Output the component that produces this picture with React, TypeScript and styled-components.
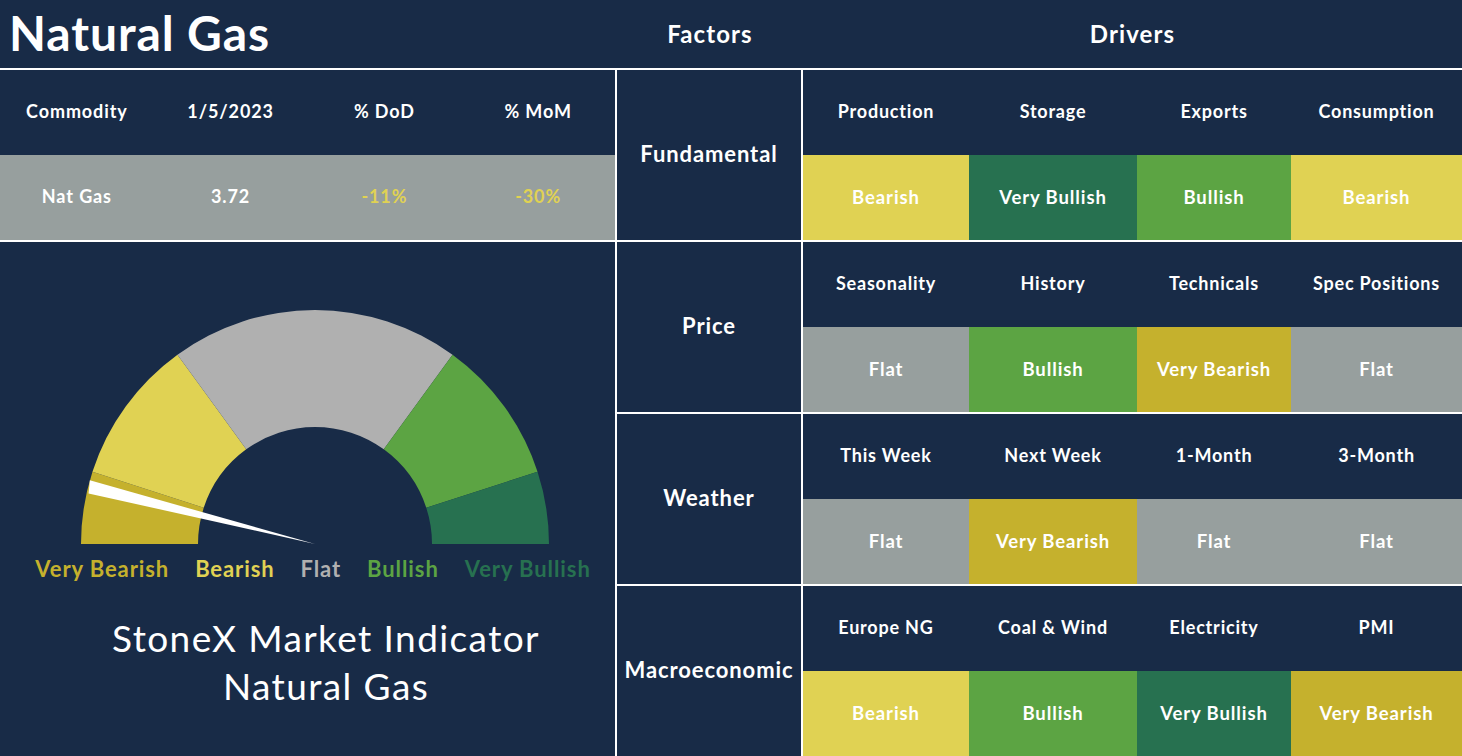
import React from "react";
import styled, { createGlobalStyle } from "styled-components";

const NAVY = "#182b47";
const CELL_GRAY = "#979f9e";
const SIGNAL: Record<string, string> = {
  "Very Bearish": "#c5b12d",
  Bearish: "#e0d253",
  Flat: CELL_GRAY,
  Bullish: "#5ca443",
  "Very Bullish": "#277150",
};

const GlobalStyle = createGlobalStyle`
  html, body { margin: 0; padding: 0; background: ${NAVY}; }
  body { font-family: Lato, "Noto Sans", "DejaVu Sans", sans-serif; color: #fff; }
  * { box-sizing: border-box; }
`;

const Page = styled.div`
  width: 1462px;
  height: 756px;
  overflow: hidden;
  display: flex;
  flex-direction: column;
  background: #fff;
  gap: 2px;
`;

const TitleBar = styled.header`
  height: 68px;
  flex: none;
  display: grid;
  grid-template-columns: 617px 186px 1fr;
  align-items: center;
  background: ${NAVY};
`;

const MainTitle = styled.h1`
  margin: -2px 0 0 9px;
  font-size: 48px;
  font-weight: 700;
  letter-spacing: 0.9px;
  line-height: 1;
`;

const ColumnTitle = styled.h2`
  margin: -2px 0 0;
  text-align: center;
  font-size: 24px;
  font-weight: 700;
  letter-spacing: 1.1px;
`;

const Body = styled.div`
  flex: 1;
  display: flex;
  gap: 2px;
  min-height: 0;
`;

const LeftPanel = styled.section`
  width: 615px;
  flex: none;
  display: flex;
  flex-direction: column;
  gap: 2px;
`;

const CommodityTable = styled.div`
  display: grid;
  grid-template-columns: repeat(4, 1fr);
  grid-template-rows: 85px 85px;
  background: ${NAVY};
`;

const TableCell = styled.div<{ $shade?: boolean; $color?: string }>`
  display: flex;
  align-items: center;
  justify-content: center;
  padding-bottom: 3px;
  font-size: 18px;
  font-weight: 700;
  letter-spacing: 0.9px;
  background: ${(p) => (p.$shade ? CELL_GRAY : "transparent")};
  color: ${(p) => p.$color || "#fff"};
`;

const GaugePanel = styled.div`
  flex: 1;
  background: ${NAVY};
  display: flex;
  flex-direction: column;
  align-items: center;
  padding: 66px 0 0 15px;
`;

const LabelRow = styled.div`
  display: flex;
  gap: 26px;
  margin-top: 9px;
  margin-left: -4px;
`;

const GaugeLabel = styled.span<{ $color: string }>`
  font-size: 22px;
  font-weight: 700;
  letter-spacing: 0.9px;
  color: ${(p) => p.$color};
`;

const IndicatorTitle = styled.div`
  margin-top: 32px;
  margin-left: 22px;
  text-align: center;
  font-size: 37px;
  font-weight: 400;
  letter-spacing: 1.4px;
  line-height: 48px;
`;

const RightPanel = styled.section`
  flex: 1;
  display: flex;
  flex-direction: column;
  gap: 2px;
`;

const FactorRow = styled.div`
  flex: 1;
  display: flex;
  gap: 2px;
`;

const FactorLabel = styled.div`
  width: 184px;
  flex: none;
  background: ${NAVY};
  display: flex;
  align-items: center;
  justify-content: center;
  padding-bottom: 3px;
  font-size: 22px;
  font-weight: 700;
  letter-spacing: 0.9px;
`;

const DriverGrid = styled.div`
  flex: 1;
  display: grid;
  grid-template-columns: 166px 168px 154px 1fr;
  grid-template-rows: 85px 85px;
  background: ${NAVY};
`;

const DriverName = styled.div`
  display: flex;
  align-items: center;
  justify-content: center;
  padding-bottom: 3px;
  font-size: 18px;
  font-weight: 700;
  letter-spacing: 0.8px;
`;

const DriverValue = styled.div<{ $bg: string }>`
  display: flex;
  align-items: center;
  justify-content: center;
  padding-bottom: 2px;
  font-size: 18.5px;
  font-weight: 700;
  letter-spacing: 0.9px;
  background: ${(p) => p.$bg};
`;

const factors: { name: string; drivers: [string, string][] }[] = [
  {
    name: "Fundamental",
    drivers: [
      ["Production", "Bearish"],
      ["Storage", "Very Bullish"],
      ["Exports", "Bullish"],
      ["Consumption", "Bearish"],
    ],
  },
  {
    name: "Price",
    drivers: [
      ["Seasonality", "Flat"],
      ["History", "Bullish"],
      ["Technicals", "Very Bearish"],
      ["Spec Positions", "Flat"],
    ],
  },
  {
    name: "Weather",
    drivers: [
      ["This Week", "Flat"],
      ["Next Week", "Very Bearish"],
      ["1-Month", "Flat"],
      ["3-Month", "Flat"],
    ],
  },
  {
    name: "Macroeconomic",
    drivers: [
      ["Europe NG", "Bearish"],
      ["Coal & Wind", "Bullish"],
      ["Electricity", "Very Bullish"],
      ["PMI", "Very Bearish"],
    ],
  },
];

const CX = 240;
const CY = 236;
const R = 234;
const RI = 117;

function pt(radius: number, deg: number): [number, number] {
  const a = (deg * Math.PI) / 180;
  return [CX - radius * Math.cos(a), CY - radius * Math.sin(a)];
}

function segment(a0: number, a1: number): string {
  const [x0, y0] = pt(R, a0);
  const [x1, y1] = pt(R, a1);
  const [x2, y2] = pt(RI, a1);
  const [x3, y3] = pt(RI, a0);
  return `M${x0} ${y0} A${R} ${R} 0 0 1 ${x1} ${y1} L${x2} ${y2} A${RI} ${RI} 0 0 0 ${x3} ${y3} Z`;
}

const gaugeSegments: [number, number, string][] = [
  [0, 18, "#c5b12d"],
  [18, 54, "#e0d253"],
  [54, 126, "#b0b0b0"],
  [126, 162, "#5ca443"],
  [162, 180, "#277150"],
];

const Gauge: React.FC = () => {
  const [n1x, n1y] = pt(232, 12.6);
  const [n2x, n2y] = pt(234, 15.8);
  return (
    <svg width="480" height="238" viewBox="0 0 480 238">
      {gaugeSegments.map(([a0, a1, c]) => (
        <path key={a0} d={segment(a0, a1)} fill={c} />
      ))}
      <path d={`M${CX} ${CY} L${n1x} ${n1y} L${n2x} ${n2y} Z`} fill="#fff" />
    </svg>
  );
};

const gaugeLabels: [string, string][] = [
  ["Very Bearish", "#c5b12d"],
  ["Bearish", "#e0d253"],
  ["Flat", "#b0b0b0"],
  ["Bullish", "#5ca443"],
  ["Very Bullish", "#277150"],
];

export default function App() {
  return (
    <>
      <GlobalStyle />
      <Page>
        <TitleBar>
          <MainTitle>Natural Gas</MainTitle>
          <ColumnTitle>Factors</ColumnTitle>
          <ColumnTitle>Drivers</ColumnTitle>
        </TitleBar>
        <Body>
          <LeftPanel>
            <CommodityTable>
              <TableCell>Commodity</TableCell>
              <TableCell>1/5/2023</TableCell>
              <TableCell>% DoD</TableCell>
              <TableCell>% MoM</TableCell>
              <TableCell $shade>Nat Gas</TableCell>
              <TableCell $shade>3.72</TableCell>
              <TableCell $shade $color="#e0d253">-11%</TableCell>
              <TableCell $shade $color="#e0d253">-30%</TableCell>
            </CommodityTable>
            <GaugePanel>
              <Gauge />
              <LabelRow>
                {gaugeLabels.map(([t, c]) => (
                  <GaugeLabel key={t} $color={c}>
                    {t}
                  </GaugeLabel>
                ))}
              </LabelRow>
              <IndicatorTitle>
                StoneX Market Indicator
                <br />
                Natural Gas
              </IndicatorTitle>
            </GaugePanel>
          </LeftPanel>
          <RightPanel>
            {factors.map((f) => (
              <FactorRow key={f.name}>
                <FactorLabel>{f.name}</FactorLabel>
                <DriverGrid>
                  {f.drivers.map(([d]) => (
                    <DriverName key={d}>{d}</DriverName>
                  ))}
                  {f.drivers.map(([d, v]) => (
                    <DriverValue key={d + v} $bg={SIGNAL[v]}>
                      {v}
                    </DriverValue>
                  ))}
                </DriverGrid>
              </FactorRow>
            ))}
          </RightPanel>
        </Body>
      </Page>
    </>
  );
}
